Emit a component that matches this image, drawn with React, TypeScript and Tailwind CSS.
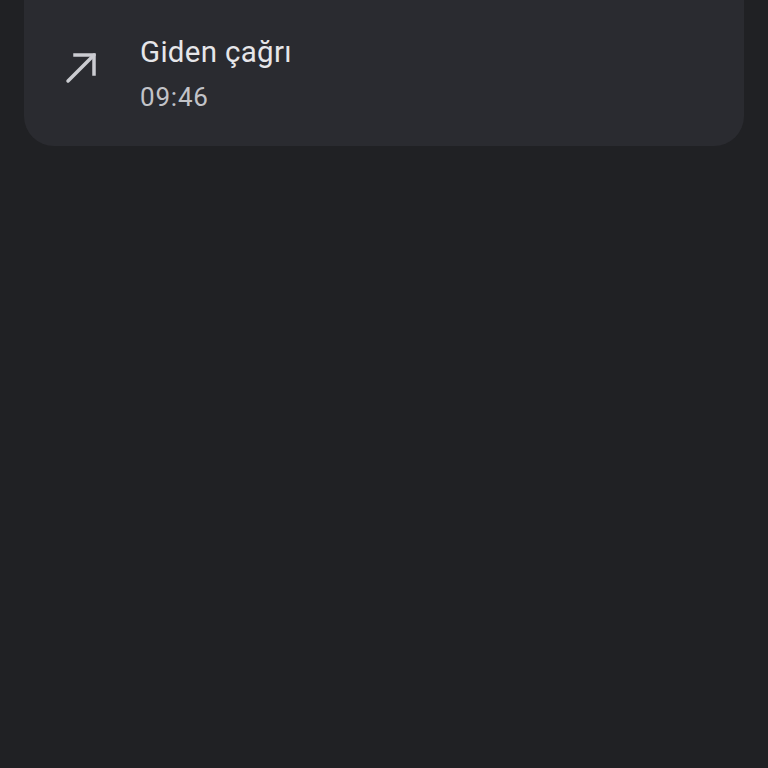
export default function App() {
  return (
    <div className="h-[768px] w-full overflow-hidden bg-[#202124] px-6" style={{ fontFamily: "Roboto, 'Noto Sans', sans-serif" }}>
      <div className="-mt-8 flex items-start rounded-[30px] bg-[#2a2b30] pb-[33px] pt-[64px]">
        <div className="flex w-[116px] shrink-0 justify-center pr-[2px] pt-[18px]">
          <svg width="34" height="34" viewBox="0 0 34 34" fill="none" stroke="#cbccd1" strokeWidth="3.5" strokeLinecap="square">
            <path d="M4 31 L30 5" strokeLinecap="round" />
            <path d="M11 5 H30 V24" strokeLinejoin="miter" />
          </svg>
        </div>
        <div className="flex flex-col">
          <div className="text-[29.5px] leading-[40px] tracking-[0.3px] text-[#e6e6e9]">Giden çağrı</div>
          <div className="mt-[9px] text-[26px] leading-[32px] tracking-[0.8px] text-[#c2c3c8]">09:46</div>
        </div>
      </div>
    </div>
  );
}
